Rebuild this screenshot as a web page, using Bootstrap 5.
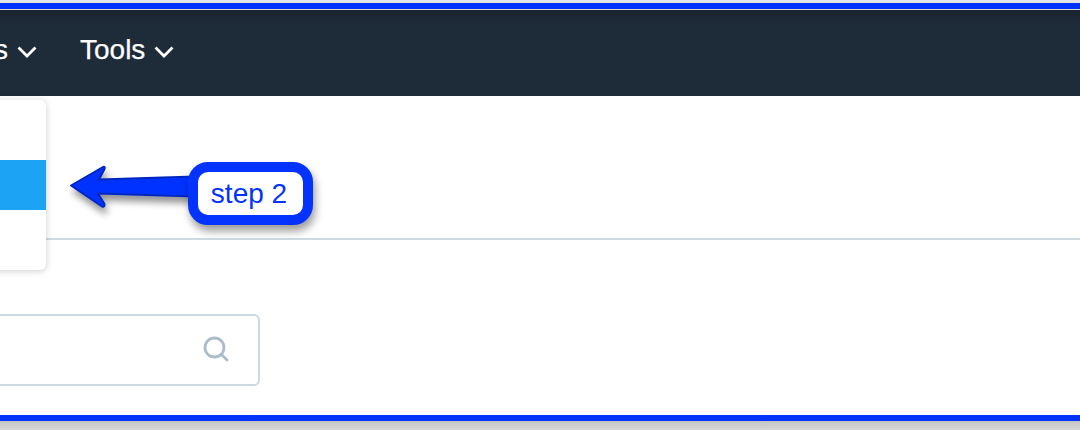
<!DOCTYPE html>
<html lang="en">
<head>
<meta charset="utf-8">
<title>Tools</title>
<link rel="stylesheet" href="https://cdn.jsdelivr.net/npm/bootstrap@5.3.0/dist/css/bootstrap.min.css">
<style>
html,body{height:100%;overflow:hidden}
body{background:#fff;font-family:"Liberation Sans",Arial,sans-serif;width:1080px;height:430px;position:relative}
.shot-top{height:3px;background:#e4e4e4}
.shot-rule{height:6px;background:#0433ff}
.shot-gap{height:1px;background:#d8dadb}
.top-nav{height:86px;background:linear-gradient(#19232e 0,#1e2b38 12px);padding-bottom:6px!important;flex-wrap:nowrap}
.top-nav .nav-link{color:#fff;font-size:28px;line-height:1;padding:0;display:flex;align-items:center;gap:9px;-webkit-text-stroke:.25px #fff}
.top-nav .nav-link svg{margin-top:5px}
.first-item{margin-left:-14px;margin-right:27px}
.page-main{height:319px;position:relative;background:#fff}
.head-rule{position:absolute;left:0;right:0;top:142px;height:2px;background:#cfd9e0;border:0;margin:0;opacity:1}
.menu-panel{position:absolute;left:-10px;top:4px;width:56px;height:170px;background:#fff;border-radius:6px;box-shadow:0 1px 7px rgba(0,0,0,.2);z-index:2}
.menu-active{margin-top:60px;height:50px;background:#1ca3f4}
.search-box{position:absolute;left:-10px;top:218px;width:270px;height:72px;border:2px solid #cdd8df;border-radius:6px;background:#fff}
.search-box svg{position:absolute;right:29px;top:20px}
.arrow-mark{position:absolute;left:60px;top:60px;z-index:3;overflow:visible}
.step-note{position:absolute;left:188px;top:66px;width:125px;height:63px;border:10px solid #0433ff;border-radius:20px;background:#fff;color:#0433ff;font-size:28px;line-height:1;padding-right:3px;box-shadow:2px 6px 9px rgba(0,0,0,.4);z-index:4}
.shot-rule-low{height:6px;background:#0433ff}
.shot-foot{height:9px;background:linear-gradient(#c4c4c4,#d8d8d8)}
</style>
</head>
<body>
<div class="shot-top"></div>
<div class="shot-rule"></div>
<div class="shot-gap"></div>
<nav class="top-nav navbar navbar-expand p-0 align-items-center justify-content-start">
  <ul class="navbar-nav flex-row align-items-center">
    <li class="nav-item first-item"><a class="nav-link" href="#">s
      <svg width="20" height="13" viewBox="0 0 20 13" fill="none" stroke="#fff" stroke-width="2.800" stroke-linecap="square"><path d="M2.500 2.500l7.500 7.500 7.500-7.500"/></svg></a></li>
    <li class="nav-item"><a class="nav-link" href="#">Tools
      <svg width="20" height="13" viewBox="0 0 20 13" fill="none" stroke="#fff" stroke-width="2.800" stroke-linecap="square"><path d="M2.500 2.500l7.500 7.500 7.500-7.500"/></svg></a></li>
  </ul>
</nav>
<main class="page-main">
  <div class="menu-panel"><div class="menu-active"></div></div>
  <hr class="head-rule">
  <svg class="arrow-mark" width="140" height="60" viewBox="60 156 140 60">
    <defs><filter id="arrowShade" x="-20%" y="-30%" width="140%" height="170%"><feDropShadow dx="2" dy="6" stdDeviation="3.500" flood-color="#000" flood-opacity=".42"/></filter></defs>
    <path d="M71 185.500 L103 167 Q105.500 166 104.500 169 L99 179.500 L195 176.500 L195 196.500 L98 193.500 L104.500 204 Q105 207.500 102 206.500 Z" fill="#0433ff" stroke="#0428c0" stroke-width="2" stroke-linejoin="round" filter="url(#arrowShade)"/>
  </svg>
  <div class="step-note d-flex align-items-center justify-content-center">step 2</div>
  <div class="search-box">
    <svg width="26" height="26" viewBox="0 0 26 26" fill="none" stroke="#adbdc8" stroke-width="2.800"><circle cx="11.500" cy="11.500" r="9.500"/><path d="M18.500 18.500l5.500 5.500" stroke-linecap="round"/></svg>
  </div>
</main>
<div class="shot-rule-low"></div>
<div class="shot-foot"></div>
<script src="https://cdn.jsdelivr.net/npm/bootstrap@5.3.0/dist/js/bootstrap.bundle.min.js"></script>
</body>
</html>
